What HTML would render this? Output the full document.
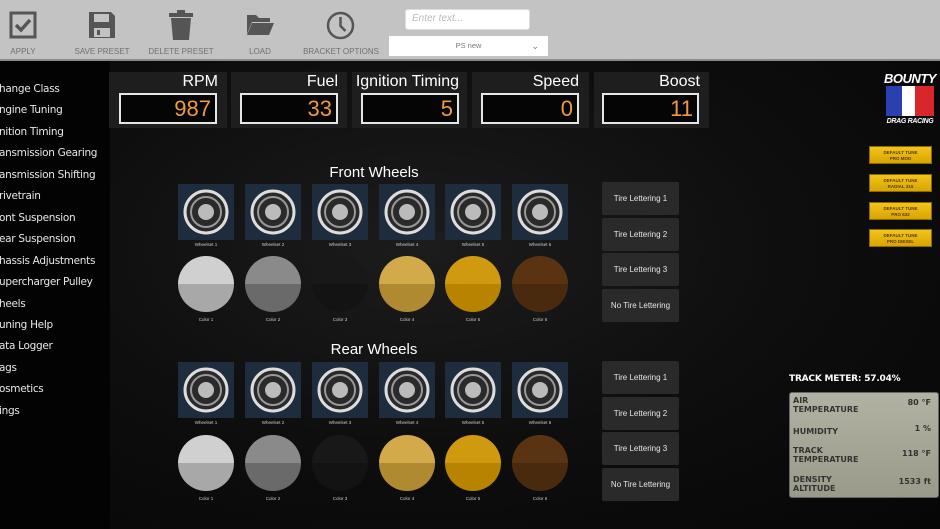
<!DOCTYPE html>
<html><head><style>
*{margin:0;padding:0;box-sizing:border-box}
body{width:940px;height:529px;overflow:hidden;background:#0a0a0a;font-family:"Liberation Sans",sans-serif;position:relative}
.a{position:absolute}
#tb{left:0;top:0;width:940px;height:61px;background:#c3c3c3;border-bottom:2px solid #8a8a8a}
.tl{font-size:8px;color:#707070;text-align:center;width:80px;top:47px}
#main{left:0;top:61px;width:940px;height:468px;background:radial-gradient(ellipse at 45% 40%,#1c1c1c 0%,#0e0e0e 50%,#060606 100%)}
.menu{left:-1px;font-size:10.5px;color:#e8e8e8;font-family:"DejaVu Sans",sans-serif;letter-spacing:-.3px}
.gp{top:72px;height:56px;background:#1e1e1e}
.gl{top:73px;font-size:16px;color:#fff;text-align:right}
.gv{top:93px;height:31px;border:2px solid #e6e6e6;background:#050505;color:#f09a40;font-size:22px;text-align:right;padding-right:4px;line-height:27px}
.ti{width:56px;height:56px;background:#1d2d3d}
.lb{font-size:4.5px;color:#ccc;width:56px;text-align:center}
.ci{width:56px;height:56px;border-radius:50%}
.bt{left:602px;width:77px;height:33px;background:#2a2a2a;border-radius:2px;color:#e6e6e6;font-size:8px;text-align:center;line-height:33px}
.yb{left:869px;width:63px;height:18px;background:linear-gradient(#f2c41c,#d9a400);border:1px solid #8a6a00;font-size:4.5px;font-weight:bold;color:#5a3a00;text-align:center;line-height:6px;padding-top:3px}
.h{font-size:15px;color:#fff;width:200px;text-align:center}
.tr{font-size:8px;font-weight:bold;color:#333;font-family:"DejaVu Sans",sans-serif;line-height:9px}
</style></head><body>
<div id="tb" class="a">
<svg class="a" style="left:9px;top:11px" width="28" height="28" viewBox="0 0 28 28"><rect x="2" y="2" width="24" height="24" fill="none" stroke="#555" stroke-width="3"/><path d="M7 14l5 5 9-10" fill="none" stroke="#555" stroke-width="3.5"/></svg>
<div class="a tl" style="left:-17px">APPLY</div>
<svg class="a" style="left:88px;top:11px" width="28" height="28" viewBox="0 0 28 28"><path d="M1 1h22l4 4v22H1z" fill="#555"/><rect x="6" y="3" width="15" height="8" fill="#c3c3c3"/><rect x="6" y="17" width="16" height="9" fill="#c3c3c3"/><rect x="9" y="19" width="3" height="5" fill="#555"/></svg>
<div class="a tl" style="left:62px">SAVE PRESET</div>
<svg class="a" style="left:168px;top:10px" width="26" height="30" viewBox="0 0 26 30"><rect x="1" y="3" width="24" height="4" fill="#555"/><rect x="9" y="0" width="8" height="4" fill="#555"/><path d="M3 8h20l-2 22H5z" fill="#555"/></svg>
<div class="a tl" style="left:141px">DELETE PRESET</div>
<svg class="a" style="left:246px;top:14px" width="28" height="22" viewBox="0 0 28 22"><path d="M1 1h9l3 3h11v4H6L1 20z" fill="#555"/><path d="M6 9h22l-5 12H1z" fill="#555"/></svg>
<div class="a tl" style="left:220px">LOAD</div>
<svg class="a" style="left:326px;top:11px" width="29" height="29" viewBox="0 0 29 29"><circle cx="14.5" cy="14.5" r="12.5" fill="none" stroke="#555" stroke-width="2.5"/><path d="M14.5 6v9l5 5" fill="none" stroke="#555" stroke-width="2.5"/></svg>
<div class="a tl" style="left:300px;width:82px">BRACKET OPTIONS</div>
<div class="a" style="left:405px;top:9px;width:125px;height:21px;background:#fff;border-radius:3px;border:1px solid #ddd;font-size:10px;color:#bbb;font-style:italic;padding:3px 6px">Enter text...</div>
<div class="a" style="left:389px;top:36px;width:159px;height:20px;background:#fff;font-size:7.5px;color:#777;text-align:center;line-height:20px">PS new<span class="a" style="right:9px;top:0;font-size:9px">&#8964;</span></div>
</div>
<div id="main" class="a"></div>
<div class="a" style="left:0;top:61px;width:110px;height:468px;background:#030303"></div>
<div class="a menu" style="top:79px;line-height:21.45px">hange Class<br>ngine Tuning<br>nition Timing<br>ansmission Gearing<br>ansmission Shifting<br>rivetrain<br>ont Suspension<br>ear Suspension<br>hassis Adjustments<br>upercharger Pulley<br>heels<br>uning Help<br>ata Logger<br>ags<br>osmetics<br>ings</div>

<div class="a gp" style="left:109px;width:118px"></div><div class="a gl" style="left:109px;width:109px">RPM</div><div class="a gv" style="left:119px;width:98px">987</div>
<div class="a gp" style="left:231px;width:116px"></div><div class="a gl" style="left:231px;width:107px">Fuel</div><div class="a gv" style="left:240px;width:98px">33</div>
<div class="a gp" style="left:352px;width:115px"></div><div class="a gl" style="left:352px;width:107px">Ignition Timing</div><div class="a gv" style="left:361px;width:98px">5</div>
<div class="a gp" style="left:472px;width:117px"></div><div class="a gl" style="left:472px;width:107px">Speed</div><div class="a gv" style="left:481px;width:98px">0</div>
<div class="a gp" style="left:594px;width:115px"></div><div class="a gl" style="left:594px;width:106px">Boost</div><div class="a gv" style="left:602px;width:97px">11</div>

<div class="a h" style="left:274px;top:164px">Front Wheels</div>
<div class="a h" style="left:274px;top:341px">Rear Wheels</div>

<div id="w"></div>

<div class="a bt" style="top:182px">Tire Lettering 1</div>
<div class="a bt" style="top:218px">Tire Lettering 2</div>
<div class="a bt" style="top:253px">Tire Lettering 3</div>
<div class="a bt" style="top:289px">No Tire Lettering</div>
<div class="a bt" style="top:361px">Tire Lettering 1</div>
<div class="a bt" style="top:397px">Tire Lettering 2</div>
<div class="a bt" style="top:432px">Tire Lettering 3</div>
<div class="a bt" style="top:468px">No Tire Lettering</div>

<div class="a" style="left:884px;top:72px;width:52px;height:58px;text-align:center;white-space:nowrap">
<div style="font-size:13px;font-weight:bold;font-style:italic;color:#fff;line-height:14px;letter-spacing:-.5px">BOUNTY</div>
<div style="margin:0 2px;height:30px;background:linear-gradient(90deg,#2a3fb0 33%,#fff 33%,#fff 60%,#d8262a 60%)"></div>
<div style="font-size:7px;font-weight:bold;font-style:italic;color:#fff;line-height:12px;letter-spacing:-.3px">DRAG RACING</div></div>
<div class="a yb" style="top:146px">DEFAULT TUNE<br>PRO MOD</div>
<div class="a yb" style="top:174px">DEFAULT TUNE<br>RADIAL 315</div>
<div class="a yb" style="top:202px">DEFAULT TUNE<br>PRO 632</div>
<div class="a yb" style="top:229px">DEFAULT TUNE<br>PRO DIESEL</div>

<div class="a" style="left:789px;top:374px;font-size:9px;font-weight:bold;color:#fff;font-family:'DejaVu Sans',sans-serif;letter-spacing:-.2px">TRACK METER: 57.04%</div>
<div class="a" style="left:789px;top:392px;width:150px;height:106px;background:linear-gradient(#b2b2a4,#9a9a8a);border-radius:3px;border:1px solid #666">
<div class="a tr" style="left:3px;top:3px">AIR<br>TEMPERATURE</div><div class="a tr" style="right:7px;top:5px">80 °F</div>
<div class="a tr" style="left:3px;top:34px">HUMIDITY</div><div class="a tr" style="right:7px;top:31px">1 %</div>
<div class="a tr" style="left:3px;top:53px">TRACK<br>TEMPERATURE</div><div class="a tr" style="right:7px;top:56px">118 °F</div>
<div class="a tr" style="left:3px;top:82px">DENSITY<br>ALTITUDE</div><div class="a tr" style="right:7px;top:84px">1533 ft</div>
</div>

<script>
var xs=[178,245,312,379,445,512],cols=[["#d0d0d0","#a8a8a8"],["#8a8a8a","#6a6a6a"],["#181818","#131313"],["#d2aa4a","#b08a30"],["#d09a10","#b88400"],["#5a3412","#4a2a0e"]];
var h="";
[[184,256],[362,435]].forEach(function(r){
xs.forEach(function(x,i){
h+='<div class="a ti" style="left:'+x+'px;top:'+r[0]+'px"><svg width="56" height="56"><circle cx="28" cy="28" r="21" fill="#2a2a2a" stroke="#ddd" stroke-width="3"/><circle cx="28" cy="28" r="15" fill="none" stroke="#999" stroke-width="2"/><circle cx="28" cy="28" r="8" fill="#bbb"/></svg></div>';
h+='<div class="a lb" style="left:'+x+'px;top:'+(r[0]+58)+'px">Wheelset '+(i+1)+'</div>';
h+='<div class="a ci" style="left:'+x+'px;top:'+r[1]+'px;background:linear-gradient('+cols[i][0]+' 50%,'+cols[i][1]+' 50%)"></div>';
h+='<div class="a lb" style="left:'+x+'px;top:'+(r[1]+61)+'px">Color '+(i+1)+'</div>';
});});
document.getElementById("w").innerHTML=h;
</script>
</body></html>
